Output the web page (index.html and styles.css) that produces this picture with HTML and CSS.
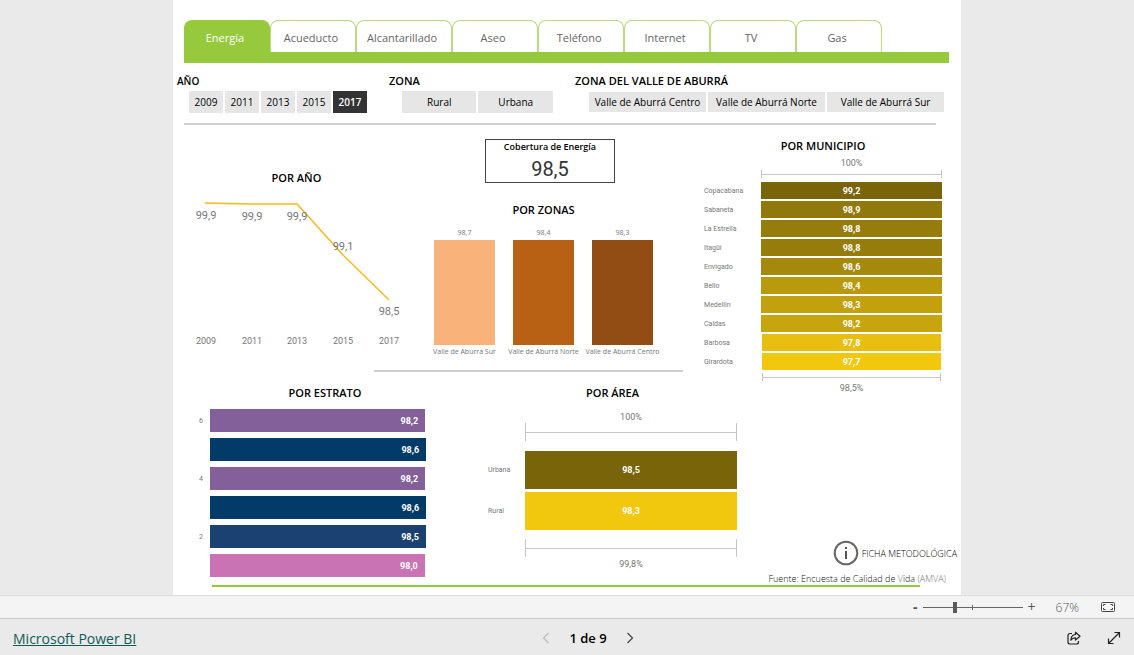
FILE: index.html
```html
<!DOCTYPE html>
<html lang="es">
<head>
<meta charset="utf-8">
<meta name="viewport" content="width=device-width, initial-scale=1">
<title>Cobertura de Energía</title>
<link rel="stylesheet" href="styles.css">
</head>
<body>
<main class="stage">
  <article class="report">
    <nav class="tabs" aria-label="Servicios">
      <button class="tab tab-active">Energía</button>
      <button class="tab">Acueducto</button>
      <button class="tab tab-wide">Alcantarillado</button>
      <button class="tab">Aseo</button>
      <button class="tab">Teléfono</button>
      <button class="tab">Internet</button>
      <button class="tab">TV</button>
      <button class="tab">Gas</button>
    </nav>
    <section class="filters">
      <div class="filter filter-year">
        <h2 class="title">AÑO</h2>
        <div class="options">
          <button class="option">2009</button>
          <button class="option">2011</button>
          <button class="option">2013</button>
          <button class="option">2015</button>
          <button class="option option-selected">2017</button>
        </div>
      </div>
      <div class="filter filter-zone">
        <h2 class="title">ZONA</h2>
        <div class="options">
          <button class="option">Rural</button>
          <button class="option">Urbana</button>
        </div>
      </div>
      <div class="filter filter-valley">
        <h2 class="title">ZONA DEL VALLE DE ABURRÁ</h2>
        <div class="options">
          <button class="option">Valle de Aburrá Centro</button>
          <button class="option">Valle de Aburrá Norte</button>
          <button class="option">Valle de Aburrá Sur</button>
        </div>
      </div>
    </section>
    <hr class="rule rule-top">
    <div class="board">
      <section class="year">
        <h2 class="title">POR AÑO</h2>
        <svg class="line-chart" viewBox="0 0 247 165" role="img" aria-label="Cobertura por año">
          <polyline points="32,17 78,18 124,18 170,69 216,114"/>
          <g class="line-value">
            <text x="33" y="33">99,9</text>
            <text x="79" y="34">99,9</text>
            <text x="124" y="34">99,9</text>
            <text x="170" y="64">99,1</text>
            <text x="216" y="129">98,5</text>
          </g>
          <g class="line-axis">
            <text x="33" y="158">2009</text>
            <text x="79" y="158">2011</text>
            <text x="124" y="158">2013</text>
            <text x="170" y="158">2015</text>
            <text x="216" y="158">2017</text>
          </g>
        </svg>
      </section>
      <section class="zones">
        <div class="card">
          <span class="card-label">Cobertura de Energía</span>
          <span class="card-value">98,5</span>
        </div>
        <h2 class="title">POR ZONAS</h2>
        <div class="columns">
          <div class="column"><span>98,7</span><i class="column-bar sur"></i><span>Valle de Aburrá Sur</span></div>
          <div class="column"><span>98,4</span><i class="column-bar norte"></i><span>Valle de Aburrá Norte</span></div>
          <div class="column"><span>98,3</span><i class="column-bar centro"></i><span>Valle de Aburrá Centro</span></div>
        </div>
      </section>
      <hr class="rule rule-middle">
      <section class="towns">
        <h2 class="title">POR MUNICIPIO</h2>
        <div class="funnel">
          <span class="percent">100%</span>
          <i class="bracket"></i>
          <ul class="bars">
            <li><span>Copacabana</span><b class="bar m1">99,2</b></li>
            <li><span>Sabaneta</span><b class="bar m2">98,9</b></li>
            <li><span>La Estrella</span><b class="bar m3">98,8</b></li>
            <li><span>Itagüí</span><b class="bar m3">98,8</b></li>
            <li><span>Envigado</span><b class="bar m4">98,6</b></li>
            <li><span>Bello</span><b class="bar m5">98,4</b></li>
            <li><span>Medellín</span><b class="bar m6">98,3</b></li>
            <li><span>Caldas</span><b class="bar m7">98,2</b></li>
            <li><span>Barbosa</span><b class="bar m8">97,8</b></li>
            <li><span>Girardota</span><b class="bar m9">97,7</b></li>
          </ul>
          <i class="bracket bracket-end"></i>
          <span class="percent">98,5%</span>
        </div>
      </section>
      <section class="strata">
        <h2 class="title">POR ESTRATO</h2>
        <ul class="bars">
          <li><span>6</span><b class="bar violet" style="width:99.2%">98,2</b></li>
          <li><span></span><b class="bar navy" style="width:99.6%">98,6</b></li>
          <li><span>4</span><b class="bar violet" style="width:99.2%">98,2</b></li>
          <li><span></span><b class="bar navy" style="width:99.6%">98,6</b></li>
          <li><span>2</span><b class="bar blue" style="width:99.5%">98,5</b></li>
          <li><span></span><b class="bar pink" style="width:99%">98,0</b></li>
        </ul>
      </section>
      <section class="areas">
        <h2 class="title">POR ÁREA</h2>
        <div class="funnel">
          <span class="percent">100%</span>
          <i class="bracket"></i>
          <ul class="bars">
            <li><span>Urbana</span><b class="bar m1">98,5</b></li>
            <li><span>Rural</span><b class="bar m9">98,3</b></li>
          </ul>
          <i class="bracket"></i>
          <span class="percent">99,8%</span>
        </div>
      </section>
      <section class="source">
        <button class="sheet">
          <svg viewBox="0 0 26 26" width="26" height="26" aria-hidden="true">
            <circle cx="13" cy="13" r="11.3" fill="none" stroke="#666" stroke-width="2"/>
            <path d="M12 7h2v2h-2zM12 11h2v8h-2z" fill="#555"/>
          </svg>
          FICHA METODOLÓGICA
        </button>
        <p class="credit">Fuente: Encuesta de Calidad de <span class="soft">V</span>ida <span class="soft">(AMVA)</span></p>
      </section>
      <hr class="baseline">
    </div>
  </article>
</main>
<div class="zoom-bar">
  <button class="plain minus" aria-label="Alejar">-</button>
  <input class="zoom-range" type="range" min="0" max="100" value="32" aria-label="Zoom">
  <button class="plain plus" aria-label="Acercar">+</button>
  <span class="zoom-value">67%</span>
  <button class="plain fit" aria-label="Ajustar a la página">
    <svg viewBox="0 0 16 12" width="16" height="12" fill="none" stroke="#444">
      <rect x="1.5" y="1.5" width="13" height="9" rx="1"/>
      <path d="M5.5 3.5h-2v1.500M3.500 7v1.500h2M10.500 3.500h2v1.500M12.500 7v1.500h-2"/>
    </svg>
  </button>
</div>
<footer class="footer">
  <a class="brand" href="#">Microsoft Power BI</a>
  <nav class="pager" aria-label="Páginas">
    <button class="plain" aria-label="Anterior" disabled>
      <svg viewBox="0 0 8 12" width="8" height="12" fill="none" stroke="#bbb" stroke-width="1.200"><path d="M6.500 1 1.500 6l5 5"/></svg>
    </button>
    <span class="page">1 de 9</span>
    <button class="plain" aria-label="Siguiente">
      <svg viewBox="0 0 8 12" width="8" height="12" fill="none" stroke="#444" stroke-width="1.200"><path d="M1.500 1l5 5-5 5"/></svg>
    </button>
  </nav>
  <div class="actions">
    <button class="plain" aria-label="Compartir">
      <svg viewBox="0 0 14 14" width="14" height="14" fill="none" stroke="#222" stroke-width="1.200" stroke-linejoin="round">
        <path d="M5 2.500H3a2 2 0 0 0-2 2V11a2 2 0 0 0 2 2h6.500a2 2 0 0 0 2-2v-1"/>
        <path d="M8.500 1.200 13 5.200 8.500 9V6.800C6.300 6.700 4.900 7.500 3.800 9.200 4 6 5.500 3.800 8.500 3.500z"/>
      </svg>
    </button>
    <button class="plain" aria-label="Pantalla completa">
      <svg viewBox="0 0 14 14" width="14" height="14" fill="none" stroke="#222" stroke-width="1.200">
        <path d="M1.500 12.500l11-11M7.500 1.500h5v5M1.500 7.500v5h5"/>
      </svg>
    </button>
  </div>
</footer>
</body>
</html>
```
FILE: styles.css
```css
* { box-sizing: border-box; }
body {
  margin: 0;
  min-height: 100vh;
  display: flex;
  flex-direction: column;
  background: #eaeaea;
  color: #000;
  font-family: "Open Sans", "Noto Sans", sans-serif;
  font-size: 10px;
}
button { font: inherit; color: inherit; border: 0; padding: 0; background: none; cursor: pointer; white-space: nowrap; }
h2, p, ul { margin: 0; padding: 0; }
ul { list-style: none; }
hr { margin: 0; border: 0; }

.stage { flex: 1; display: flex; justify-content: center; }
.report {
  width: 69.5%;
  background: #fff;
  display: flex;
  flex-direction: column;
}
.title { font-size: 11px; line-height: 16px; font-weight: 600; text-align: center; white-space: nowrap; }

.tabs {
  display: flex;
  margin: 20px 12px 0 11px;
  padding-right: 67px;
  border-bottom: 11px solid #97c93d;
}
.tab {
  flex: 86 1 0;
  height: 32px;
  padding: 2px 4px 0 0;
  border: 1px solid #b9db80;
  border-bottom: 0;
  border-radius: 8px 8px 0 0;
  color: #666;
  font-size: 11px;
}
.tab-wide { flex-grow: 97; }
.tab-active { background: #97c93d; border-color: #97c93d; color: #fff; }

.filters { display: grid; grid-template-columns: 212fr 186fr 369fr; padding: 10px 17px 0 4px; }
.filter .title { text-align: left; }
.options { display: grid; grid-auto-flow: column; grid-auto-columns: 1fr; gap: 2px; height: 26px; align-items: center; }
.filter-year .title { font-size: 10px; }
.filter-year .options { padding: 0 22px 0 12px; }
.filter-zone .options { padding: 0 22px 0 13px; }
.filter-valley .options { padding-left: 14px; }
.option { height: 22px; background: #e6e6e6; }
.filter-valley .option { height: 20px; }
.option-selected { background: #333; color: #fff; font-weight: 600; }

.rule { height: 2px; background: #cecece; }
.rule-top { margin: 8px 25px 0 11px; }

.board {
  flex: 1;
  display: grid;
  grid-template-columns: 247fr 40fr 240fr 50fr 211fr;
  grid-template-rows: 247px 25px 1fr;
}
.board > * { min-width: 0; }

.year { grid-area: 1 / 1 / 2 / 2; padding-top: 45px; }
.line-chart { display: block; width: 100%; font-family: Roboto, sans-serif; text-anchor: middle; fill: #777; }
.line-chart polyline { fill: none; stroke: #fbb917; stroke-width: 1.5; }
.line-value { font-size: 11px; }
.line-axis { font-size: 9px; }

.zones { grid-area: 1 / 2 / 2 / 4; padding: 14px 38px 0 5px; }
.card {
  display: flex;
  flex-direction: column;
  align-items: center;
  width: 130px;
  height: 44px;
  margin: 0 0 19px 60px;
  border: 1px solid #444;
}
.card-label { font-size: 9px; line-height: 13px; font-weight: 600; white-space: nowrap; }
.card-value { font: 20px/32px Roboto, sans-serif; color: #333; }
.columns { display: grid; grid-template-columns: repeat(3, 1fr); margin-top: 8px; color: #777; font-size: 7px; line-height: 14px; }
.column { display: flex; flex-direction: column; align-items: center; white-space: nowrap; }
.column-bar { width: 76%; height: 105px; }
.sur { background: #f8b27a; }
.norte { background: #b86115; }
.centro { background: #924d14; }
.rule-middle { grid-area: 1 / 1 / 2 / 4; align-self: end; margin: 0 17px 0 201px; }

.towns { grid-area: 1 / 4 / 3 / 6; padding: 13px 19px 0 4px; }
.funnel { display: grid; grid-template-columns: 57px 1fr; font-family: Roboto, sans-serif; }
.percent { grid-column: 2; color: #777; font-size: 9px; line-height: 14px; text-align: center; }
.bracket {
  grid-column: 2;
  height: 8px;
  border: 1px solid #c4c4c4;
  border-width: 0 1px;
  background: linear-gradient(#c8c8c8, #c8c8c8) center / 100% 1px no-repeat;
}
.bracket-end { margin: 0 1px; }
.funnel .bars { grid-column: 1 / 3; }
.bars { display: grid; font-family: Roboto, sans-serif; color: #777; font-size: 7px; }
.bars li { display: grid; align-items: center; }
.bar { display: flex; align-items: center; justify-content: center; color: #fff; font-size: 9px; }
.towns .percent:first-child { margin-top: 2px; }
.towns .bars { gap: 2px; margin: 4px 0 3px; }
.towns li { grid-template-columns: 57px 1fr; }
.towns .bar { height: 17px; }
.m1 { background: #7a6409; }
.m2 { background: #91780b; }
.m3 { background: #967c0b; }
.m4 { background: #a5890c; }
.m5 { background: #ba9a0d; }
.m6 { background: #c2a10d; }
.m7 { background: #c7a50e; }
.m8 { background: #e8bf10; }
.m9 { background: #f2c80f; }
.towns .m8, .towns .m9 { margin: 0 1px; }

.strata { grid-area: 2 / 1 / 4 / 3; padding: 13px 33px 0 26px; }
.strata .title { padding-left: 24px; }
.strata .bars { gap: 6px; margin-top: 8px; }
.strata li { grid-template-columns: 11px 1fr; }
.strata .bar { height: 23px; justify-content: flex-end; padding-right: 7px; }
.violet { background: #83609a; }
.navy { background: #023b68; }
.blue { background: #1b4072; }
.pink { background: #c973b5; }

.areas { grid-area: 2 / 3 / 4 / 5; padding: 13px 13px 0 28px; }
.areas .funnel { grid-template-columns: 37px 1fr; margin-top: 10px; }
.areas .percent:first-child { line-height: 12px; }
.areas .bars { gap: 3px; margin: 10px 0 9px; }
.areas li { grid-template-columns: 37px 1fr; }
.areas .bar { height: 38px; }
.areas .bracket { height: 18px; }

.source {
  grid-area: 3 / 5 / 4 / 6;
  display: flex;
  flex-direction: column;
  align-items: flex-end;
  justify-content: flex-end;
  padding-bottom: 8px;
}
.sheet { display: flex; align-items: center; gap: 3px; margin: 0 4px 5px 0; font-size: 9px; font-weight: 300; }
.credit { margin-right: 15px; font-size: 9px; font-weight: 300; line-height: 16px; color: #111; white-space: nowrap; }
.soft { color: #777; }
.baseline { grid-area: 3 / 1 / 4 / 6; align-self: end; height: 2px; margin: 0 41px 8px 39px; background: #97c93d; }

.plain { display: flex; align-items: center; justify-content: center; }
.zoom-bar {
  display: flex;
  align-items: center;
  justify-content: flex-end;
  height: 24px;
  padding-right: 18px;
  border-top: 1px solid #dcdcdc;
  border-bottom: 1px solid #c4c4c4;
  background: #f4f4f4;
  color: #555;
}
.minus, .plus { font-size: 14px; line-height: 20px; }
.minus { font-weight: 700; }
.zoom-range {
  appearance: none;
  width: 100px;
  height: 12px;
  margin: 0 5px;
  background:
    linear-gradient(#666, #666) center / 100% 1px no-repeat,
    linear-gradient(#666, #666) center / 1px 5px no-repeat;
}
.zoom-range::-webkit-slider-thumb { appearance: none; width: 4px; height: 11px; background: #5a5a5a; }
.zoom-range::-moz-range-thumb { width: 4px; height: 11px; border: 0; border-radius: 0; background: #5a5a5a; }
.zoom-value { margin: 0 21px 0 20px; font-size: 12px; font-weight: 300; }

.footer {
  display: grid;
  grid-template-columns: 1fr auto 1fr;
  align-items: center;
  height: 36px;
  padding: 2px 13px 0;
}
.brand { color: #0f5c57; font-size: 14px; font-weight: 400; }
.pager { display: flex; align-items: center; gap: 19px; padding-left: 42px; }
.page { font-size: 13px; font-weight: 600; }
.actions { display: flex; justify-content: flex-end; gap: 26px; }
```
